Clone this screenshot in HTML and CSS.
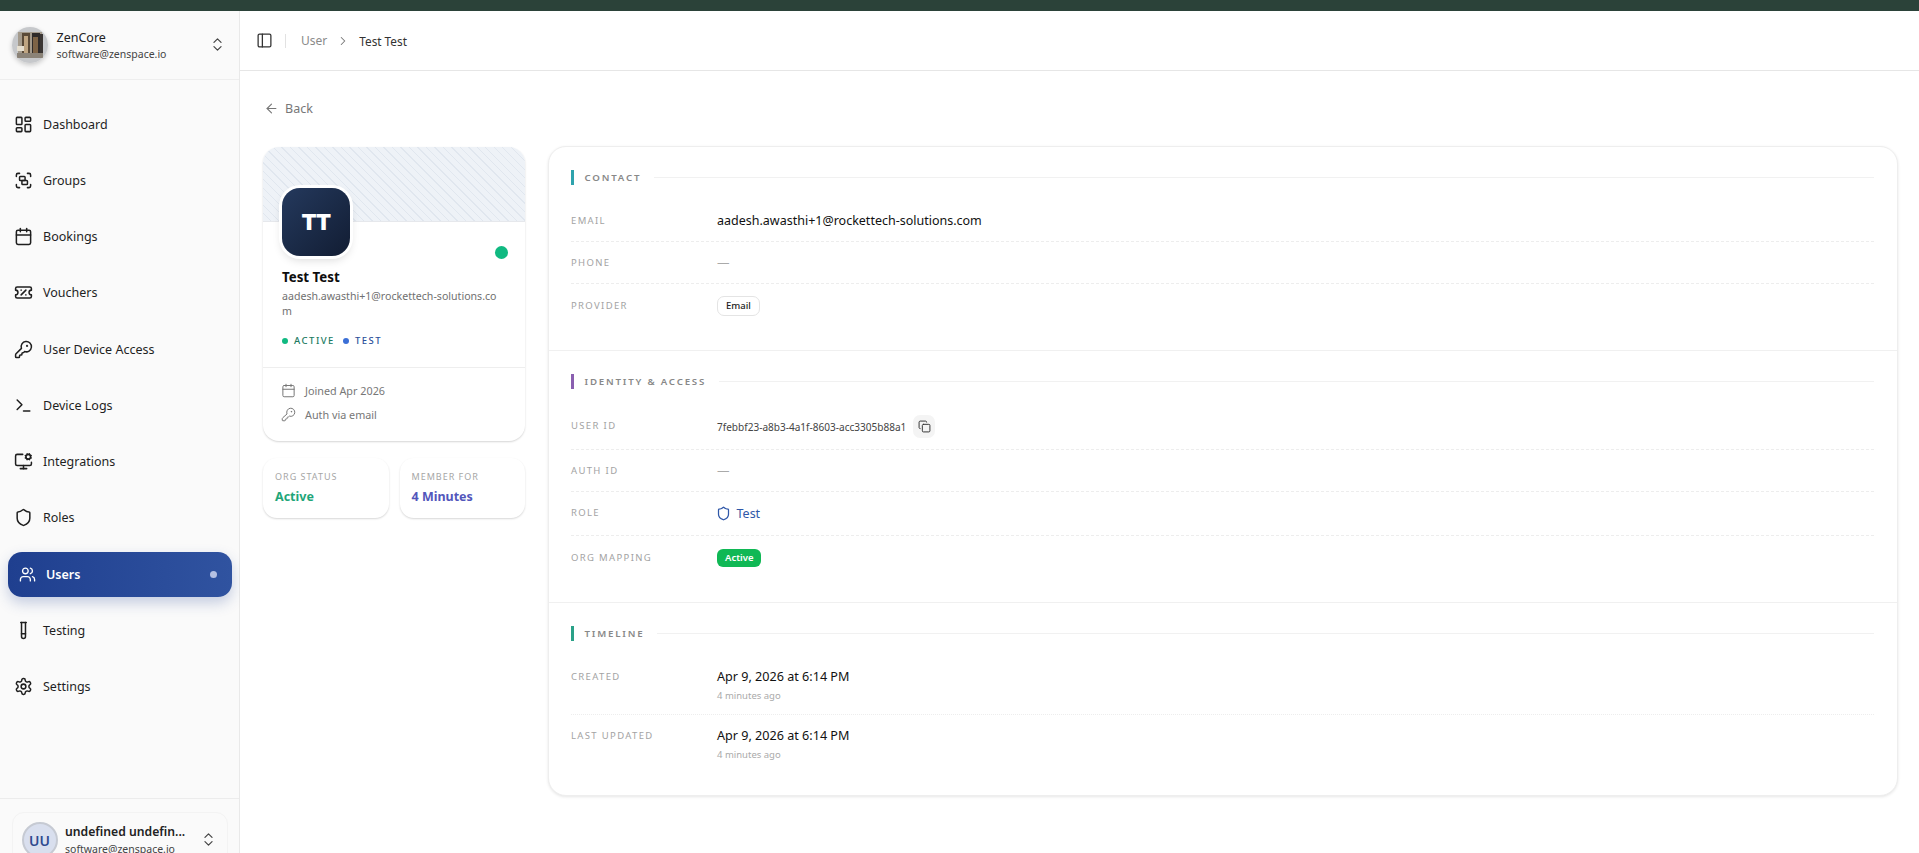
FILE: index.html
```html
<!DOCTYPE html>
<html lang="en">
<head>
<meta charset="utf-8">
<title>User</title>
<link rel="stylesheet" href="styles.css">
</head>
<body>
<svg class="defs" width="0" height="0" aria-hidden="true">
  <defs>
    <symbol id="i-dashboard" viewBox="0 0 24 24"><rect x="3" y="3" width="7" height="9" rx="1"/><rect x="14" y="3" width="7" height="5" rx="1"/><rect x="14" y="12" width="7" height="9" rx="1"/><rect x="3" y="16" width="7" height="5" rx="1"/></symbol>
    <symbol id="i-group" viewBox="0 0 24 24"><path d="M3 7V5c0-1.1.9-2 2-2h2"/><path d="M17 3h2c1.1 0 2 .9 2 2v2"/><path d="M21 17v2c0 1.1-.9 2-2 2h-2"/><path d="M7 21H5c-1.1 0-2-.9-2-2v-2"/><rect x="7" y="7" width="7" height="5" rx="1"/><rect x="10" y="12" width="7" height="5" rx="1"/></symbol>
    <symbol id="i-calendar" viewBox="0 0 24 24"><path d="M8 2v4"/><path d="M16 2v4"/><rect x="3" y="4" width="18" height="18" rx="2"/><path d="M3 10h18"/></symbol>
    <symbol id="i-ticket" viewBox="0 0 24 24"><path d="M2 9a3 3 0 1 1 0 6v2a2 2 0 0 0 2 2h16a2 2 0 0 0 2-2v-2a3 3 0 1 1 0-6V7a2 2 0 0 0-2-2H4a2 2 0 0 0-2 2Z"/><path d="M9 9h.01"/><path d="m15 9-6 6"/><path d="M15 15h.01"/></symbol>
    <symbol id="i-key" viewBox="0 0 24 24"><path d="M2.586 17.414A2 2 0 0 0 2 18.828V21a1 1 0 0 0 1 1h3a1 1 0 0 0 1-1v-1a1 1 0 0 1 1-1h1a1 1 0 0 0 1-1v-1a1 1 0 0 1 1-1h.172a2 2 0 0 0 1.414-.586l.814-.814a6.5 6.5 0 1 0-4-4z"/><circle cx="16.5" cy="7.5" r=".5"/></symbol>
    <symbol id="i-terminal" viewBox="0 0 24 24"><polyline points="4 17 10 11 4 5"/><line x1="12" y1="19" x2="20" y2="19"/></symbol>
    <symbol id="i-monitor" viewBox="0 0 24 24"><path d="M12 17v4"/><path d="m14.305 7.53.923-.382"/><path d="m15.228 4.852-.923-.383"/><path d="m16.852 3.228-.383-.924"/><path d="m16.852 8.772-.383.923"/><path d="m19.148 3.228.383-.924"/><path d="m19.53 9.696-.382-.924"/><path d="m20.772 4.852.924-.383"/><path d="m20.772 7.148.924.383"/><path d="M22 13v2a2 2 0 0 1-2 2H4a2 2 0 0 1-2-2V5a2 2 0 0 1 2-2h7"/><path d="M8 21h8"/><circle cx="18" cy="6" r="3"/></symbol>
    <symbol id="i-shield" viewBox="0 0 24 24"><path d="M20 13c0 5-3.5 7.5-7.66 8.95a1 1 0 0 1-.67-.01C7.5 20.5 4 18 4 13V6a1 1 0 0 1 1-1c2 0 4.5-1.2 6.24-2.72a1.17 1.17 0 0 1 1.52 0C14.51 3.81 17 5 19 5a1 1 0 0 1 1 1z"/></symbol>
    <symbol id="i-users" viewBox="0 0 24 24"><path d="M16 21v-2a4 4 0 0 0-4-4H6a4 4 0 0 0-4 4v2"/><path d="M16 3.128a4 4 0 0 1 0 7.744"/><path d="M22 21v-2a4 4 0 0 0-3-3.87"/><circle cx="9" cy="7" r="4"/></symbol>
    <symbol id="i-tube" viewBox="0 0 24 24"><path d="M14.5 2v17.5c0 1.4-1.1 2.5-2.5 2.5c-1.4 0-2.5-1.1-2.5-2.5V2"/><path d="M8.5 2h7"/><path d="M14.5 16h-5"/></symbol>
    <symbol id="i-settings" viewBox="0 0 24 24"><path d="M12.22 2h-.44a2 2 0 0 0-2 2v.18a2 2 0 0 1-1 1.73l-.43.25a2 2 0 0 1-2 0l-.15-.08a2 2 0 0 0-2.73.73l-.22.38a2 2 0 0 0 .73 2.73l.15.1a2 2 0 0 1 1 1.72v.51a2 2 0 0 1-1 1.74l-.15.09a2 2 0 0 0-.73 2.73l.22.38a2 2 0 0 0 2.73.73l.15-.08a2 2 0 0 1 2 0l.43.25a2 2 0 0 1 1 1.73V20a2 2 0 0 0 2 2h.44a2 2 0 0 0 2-2v-.18a2 2 0 0 1 1-1.73l.43-.25a2 2 0 0 1 2 0l.15.08a2 2 0 0 0 2.73-.73l.22-.39a2 2 0 0 0-.73-2.73l-.15-.08a2 2 0 0 1-1-1.74v-.5a2 2 0 0 1 1-1.74l.15-.09a2 2 0 0 0 .73-2.73l-.22-.38a2 2 0 0 0-2.73-.73l-.15.08a2 2 0 0 1-2 0l-.43-.25a2 2 0 0 1-1-1.73V4a2 2 0 0 0-2-2z"/><circle cx="12" cy="12" r="3"/></symbol>
    <symbol id="i-updown" viewBox="0 0 24 24"><path d="m7 15 5 5 5-5"/><path d="m7 9 5-5 5 5"/></symbol>
    <symbol id="i-panel" viewBox="0 0 24 24"><rect x="3" y="3" width="18" height="18" rx="2"/><path d="M9 3v18"/></symbol>
    <symbol id="i-chevron" viewBox="0 0 24 24"><path d="m9 18 6-6-6-6"/></symbol>
    <symbol id="i-back" viewBox="0 0 24 24"><path d="m12 19-7-7 7-7"/><path d="M19 12H5"/></symbol>
    <symbol id="i-copy" viewBox="0 0 24 24"><rect x="8" y="8" width="14" height="14" rx="2"/><path d="M4 16c-1.1 0-2-.9-2-2V4c0-1.1.9-2 2-2h10c1.1 0 2 .9 2 2"/></symbol>
  </defs>
</svg>

<div class="topstrip"></div>
<div class="shell">
  <aside class="sidebar">
    <div class="org">
      <svg class="org-photo" viewBox="0 0 36 36">
        <rect width="36" height="36" fill="#c6c8cb"/>
        <rect x="6" y="5" width="24" height="26" fill="#a39a8c"/>
        <rect x="10" y="6" width="8" height="24" fill="#5a4a38"/>
        <rect x="20" y="6" width="8" height="24" fill="#2f2b2a"/>
        <rect x="12" y="9" width="4" height="17" fill="#bfa582"/>
        <rect x="21" y="10" width="5" height="16" fill="#7d6346"/>
        <rect x="28" y="7" width="3" height="22" fill="#3a3533"/>
        <rect x="5" y="19" width="7" height="5" fill="#e6dfd0"/>
        <rect x="5" y="26" width="26" height="5" fill="#8b8378"/>
      </svg>
      <div class="org-text">
        <div class="org-name">ZenCore</div>
        <div class="org-mail">software@zenspace.io</div>
      </div>
      <svg class="ic ic-updown"><use href="#i-updown"/></svg>
    </div>

    <nav class="nav">
      <a class="nav-item"><svg class="ic nav-ic"><use href="#i-dashboard"/></svg><span>Dashboard</span></a>
      <a class="nav-item"><svg class="ic nav-ic"><use href="#i-group"/></svg><span>Groups</span></a>
      <a class="nav-item"><svg class="ic nav-ic"><use href="#i-calendar"/></svg><span>Bookings</span></a>
      <a class="nav-item"><svg class="ic nav-ic"><use href="#i-ticket"/></svg><span>Vouchers</span></a>
      <a class="nav-item"><svg class="ic nav-ic"><use href="#i-key"/></svg><span>User Device Access</span></a>
      <a class="nav-item"><svg class="ic nav-ic"><use href="#i-terminal"/></svg><span>Device Logs</span></a>
      <a class="nav-item"><svg class="ic nav-ic"><use href="#i-monitor"/></svg><span>Integrations</span></a>
      <a class="nav-item"><svg class="ic nav-ic"><use href="#i-shield"/></svg><span>Roles</span></a>
      <a class="nav-item active"><svg class="ic nav-ic"><use href="#i-users"/></svg><span>Users</span><i class="nav-dot"></i></a>
      <a class="nav-item"><svg class="ic nav-ic"><use href="#i-tube"/></svg><span>Testing</span></a>
      <a class="nav-item"><svg class="ic nav-ic"><use href="#i-settings"/></svg><span>Settings</span></a>
    </nav>

    <div class="foot">
      <div class="foot-card">
        <div class="foot-avatar">UU</div>
        <div class="foot-text">
          <div class="foot-name">undefined undefin...</div>
          <div class="foot-mail">software@zenspace.io</div>
        </div>
        <svg class="ic ic-updown"><use href="#i-updown"/></svg>
      </div>
    </div>
  </aside>

  <main class="main">
    <header class="crumbs">
      <svg class="ic ic-panel"><use href="#i-panel"/></svg>
      <span class="crumb-sep"></span>
      <span class="crumb-link">User</span>
      <svg class="ic ic-chev"><use href="#i-chevron"/></svg>
      <span class="crumb-cur">Test Test</span>
    </header>

    <div class="content">
      <a class="back"><svg class="ic ic-back"><use href="#i-back"/></svg>Back</a>

      <div class="columns">
        <div class="left">
          <section class="profile">
            <div class="banner"></div>
            <div class="profile-body">
              <div class="avatar-row">
                <div class="avatar">TT</div>
                <i class="online"></i>
              </div>
              <h1 class="name">Test Test</h1>
              <p class="mail">aadesh.awasthi+1@rockettech-solutions.com</p>
              <div class="tags">
                <span class="tag tag-green"><i></i>ACTIVE</span>
                <span class="tag tag-blue"><i></i>TEST</span>
              </div>
            </div>
            <div class="facts">
              <div class="fact"><svg class="ic ic-fact"><use href="#i-calendar"/></svg>Joined Apr 2026</div>
              <div class="fact"><svg class="ic ic-fact"><use href="#i-key"/></svg>Auth via email</div>
            </div>
          </section>
          <div class="stats">
            <div class="stat"><div class="stat-label">ORG STATUS</div><div class="stat-value green">Active</div></div>
            <div class="stat"><div class="stat-label">MEMBER FOR</div><div class="stat-value violet">4 Minutes</div></div>
          </div>
        </div>

        <section class="details">
          <div class="block block-contact">
            <div class="block-head"><i class="bar bar-teal"></i><span>CONTACT</span><b></b></div>
            <div class="row r-email"><div class="label">EMAIL</div><div class="val strong mailval">aadesh.awasthi+1@rockettech-solutions.com</div></div>
            <div class="row r-plain"><div class="label">PHONE</div><div class="val dash">—</div></div>
            <div class="row r-last"><div class="label">PROVIDER</div><div class="val"><span class="pill">Email</span></div></div>
          </div>
          <div class="block block-identity">
            <div class="block-head"><i class="bar bar-purple"></i><span>IDENTITY &amp; ACCESS</span><b></b></div>
            <div class="row r-id"><div class="label">USER ID</div><div class="val idval"><span class="mono">7febbf23-a8b3-4a1f-8603-acc3305b88a1</span><span class="copy"><svg class="ic ic-copy"><use href="#i-copy"/></svg></span></div></div>
            <div class="row r-plain"><div class="label">AUTH ID</div><div class="val dash">—</div></div>
            <div class="row r-role"><div class="label">ROLE</div><div class="val role"><svg class="ic ic-role"><use href="#i-shield"/></svg>Test</div></div>
            <div class="row r-last"><div class="label">ORG MAPPING</div><div class="val"><span class="active-pill">Active</span></div></div>
          </div>
          <div class="block block-timeline">
            <div class="block-head"><i class="bar bar-green"></i><span>TIMELINE</span><b></b></div>
            <div class="row r-time"><div class="label">CREATED</div><div class="val"><div class="strong">Apr 9, 2026 at 6:14 PM</div><div class="sub">4 minutes ago</div></div></div>
            <div class="row r-time r-end"><div class="label">LAST UPDATED</div><div class="val"><div class="strong">Apr 9, 2026 at 6:14 PM</div><div class="sub">4 minutes ago</div></div></div>
          </div>
        </section>
      </div>
    </div>
  </main>
</div>
</body>
</html>
```

FILE: styles.css
```css
* { box-sizing: border-box; }
html, body { margin: 0; height: 853px; overflow: hidden; background: #fff; }
body { font-family: "Noto Sans", "Open Sans", sans-serif; color: #111; font-size: 13px; display: flex; flex-direction: column; }
.defs { position: absolute; }
.ic { fill: none; stroke: currentColor; stroke-width: 2; stroke-linecap: round; stroke-linejoin: round; flex: none; display: block; }

.topstrip { height: 11px; background: #2b4239; flex: none; }
.shell { flex: 1; display: flex; min-height: 0; }

/* sidebar */
.sidebar { width: 240px; flex: none; background: #fafafa; border-right: 1px solid #e9e9e9; display: flex; flex-direction: column; }
.org { height: 69px; border-bottom: 1px solid #eee; display: flex; align-items: center; padding: 0 13px 1px 12px; }
.org-photo { width: 36px; height: 36px; border-radius: 50%; box-shadow: 0 2px 5px rgba(0,0,0,.2); flex: none; }
.org-text { margin: 2px 0 0 8.5px; flex: 1; min-width: 0; }
.org-name { font-size: 12.5px; line-height: 17px; color: #222; font-weight: 450; }
.org-mail { font-size: 10.5px; line-height: 16px; color: #444; }
.ic-updown { width: 17px; height: 17px; color: #444; stroke-width: 1.7; }

.nav { flex: 1; padding: 21.7px 7px 0 8px; display: flex; flex-direction: column; gap: 11.25px; }
.nav-item { height: 45px; display: flex; align-items: center; padding-left: 5.5px; font-size: 12.5px; font-weight: 450; color: #1f1f1f; }
.nav-ic { width: 19px; height: 19px; margin-right: 10.5px; stroke-width: 1.9; }
.nav-item.active { background: linear-gradient(90deg, #1f3f8f, #3053a0); color: #fff; border-radius: 14px; padding: 0 15px 0 10.5px; box-shadow: 0 6px 14px rgba(40,70,150,.25); font-weight: 600; }
.nav-item.active .nav-ic { width: 17px; height: 17px; margin-right: 10.5px; }
.nav-item.active span { flex: 1; }
.nav-dot { width: 7px; height: 7px; border-radius: 50%; background: #b4c0e2; }

.foot { border-top: 1px solid #ececec; height: 55px; padding: 13px 11px 0 12px; overflow: hidden; flex: none; }
.foot-card { height: 60px; border: 1px solid #f3f3f3; border-radius: 12px; display: flex; align-items: flex-start; padding: 9px 10.5px 0 8.5px; }
.foot-avatar { width: 36px; height: 36px; border-radius: 50%; background: #d9dfee; border: 2px solid #c6cad3; color: #2f4a8f; font-weight: 600; font-size: 14px; display: flex; align-items: center; justify-content: center; flex: none; }
.foot-text { margin: 1px 0 0 7.5px; flex: 1; min-width: 0; }
.foot-name { font-size: 12.2px; line-height: 18px; font-weight: 600; color: #222; white-space: nowrap; }
.foot-mail { font-size: 10.5px; line-height: 14px; color: #444; white-space: nowrap; margin-top: 1px; }
.foot-card .ic-updown { margin-top: 8.5px; }

/* main */
.main { flex: 1; min-width: 0; display: flex; flex-direction: column; }
.crumbs { height: 60px; border-bottom: 1px solid #e6e6e6; display: flex; align-items: center; padding: 0 0 0 16px; flex: none; }
.ic-panel { width: 17px; height: 17px; color: #333; stroke-width: 1.8; }
.crumb-sep { width: 1px; height: 14px; background: #e2e2e2; margin: 0 15px 0 12px; }
.crumb-link { font-size: 12px; color: #8a8a8a; }
.ic-chev { width: 14px; height: 14px; color: #777; margin: 0 9px; stroke-width: 1.8; }
.crumb-cur { font-size: 11.8px; color: #333; }

.content { flex: 1; padding: 27px 21px 0 23px; background: #fff; }
.back { display: flex; align-items: center; height: 20px; font-size: 12.5px; color: #777; padding-left: 1px; }
.ic-back { width: 15px; height: 15px; margin-right: 6px; color: #777; stroke-width: 1.8; }
.columns { display: flex; gap: 23px; margin-top: 28px; align-items: flex-start; }

.left { width: 262px; flex: none; display: flex; flex-direction: column; gap: 17px; padding-top: 1px; }
.profile { border-radius: 16px; background: #fff; box-shadow: 0 1px 2px rgba(0,0,0,.17); overflow: hidden; height: 294px; }
.banner { height: 75px; background-color: #eef2f7; background-image: repeating-linear-gradient(45deg, transparent 0 5px, rgba(170,185,205,.2) 5px 6px); border-bottom: 1px solid #e6e8ec; }
.profile-body { padding: 0 19px; height: 145px; display: flow-root; }
.avatar-row { display: flex; align-items: flex-end; justify-content: space-between; margin-top: -34px; }
.avatar { width: 68px; height: 68px; border-radius: 18px; background: linear-gradient(135deg, #24395d, #121d33); box-shadow: 0 0 0 3px #fff, 0 4px 10px rgba(0,0,0,.15); color: #fff; font-family: Inter, "Liberation Sans", sans-serif; font-weight: 900; font-size: 22px; letter-spacing: -.5px; display: flex; align-items: center; justify-content: center; }
.online { width: 13px; height: 13px; border-radius: 50%; background: #10b981; margin: 0 -2.3px -3px 0; }
.name { font-size: 13.3px; line-height: 20px; margin: 11px 0 0; font-weight: 700; color: #0d0d0d; }
.mail { font-size: 10.6px; line-height: 15.5px; margin: 1.5px 0 0; color: #707070; width: 220px; word-break: break-all; }
.tags { display: flex; gap: 8px; margin-top: 14px; }
.tag { font-size: 9.5px; font-weight: 500; letter-spacing: 1.5px; display: flex; align-items: center; gap: 6px; line-height: 14px; }
.tag i { width: 6px; height: 6px; border-radius: 50%; }
.tag-green { color: #207a5f; } .tag-green i { background: #10b981; }
.tag-blue { color: #2b4f9a; } .tag-blue i { background: #3b6fd6; }
.facts { border-top: 1px solid #eee; padding: 12.5px 19px 0; display: flex; flex-direction: column; gap: 5px; }
.fact { display: flex; align-items: center; font-size: 10.8px; color: #777; height: 19px; }
.ic-fact { width: 15px; height: 15px; margin-right: 9px; margin-left: -1px; color: #777; stroke-width: 1.6; }

.stats { display: flex; justify-content: space-between; }
.stat { width: 125.5px; height: 60px; border-radius: 14px; box-shadow: 0 1px 2px rgba(0,0,0,.16); padding: 12px 12px 0; background: #fff; }
.stat-label { font-size: 9px; letter-spacing: 1px; color: #a6a6a6; line-height: 13px; }
.stat-value { font-size: 12.5px; font-weight: 700; line-height: 18px; margin-top: 5px; }
.green { color: #1fa67a; } .violet { color: #5256bb; }

.details { flex: 1; min-width: 0; height: 650px; border-radius: 18px; border: 1px solid #eee; box-shadow: 0 1px 3px rgba(0,0,0,.1); background: #fff; }
.block { padding: 22px 23px 0 22px; }
.block-contact { height: 204px; border-bottom: 1px solid #f0f0f0; }
.block-identity { height: 252px; border-bottom: 1px solid #f0f0f0; }
.block-head { display: flex; align-items: center; height: 16px; font-size: 9.7px; font-weight: 600; letter-spacing: 1.8px; color: #888; margin-bottom: 19px; }
.block-head span { margin: 0 13px 0 11px; }
.block-head b { flex: 1; height: 1px; background: #f1f1f1; }
.bar { width: 2.5px; height: 15px; }
.bar-teal { background: #2fa3ad; } .bar-purple { background: #8a5fb0; } .bar-green { background: #2aa188; }

.row { display: flex; border-bottom: 1px dashed #ededed; }
.label { width: 146px; flex: none; font-size: 9.5px; letter-spacing: 1.35px; color: #a3a3a3; line-height: 14px; margin-top: 2px; }
.val { font-size: 12.5px; color: #222; min-width: 0; }
.strong { font-size: 12.6px; font-weight: 450; color: #111; line-height: 18px; }
.mailval { font-size: 12.5px; }
.dash { color: #aaa; line-height: 16px; margin-top: 1px; }
.r-email { height: 38px; padding-top: 8px; }
.r-id { height: 42px; padding-top: 7px; }
.r-id .label { margin-top: 4px; }
.r-plain { height: 42px; padding-top: 12px; }
.r-role { height: 44px; padding-top: 12px; }
.r-last { padding-top: 12px; border-bottom: 0; }
.r-last .label { margin-top: 3px; }
.pill { display: inline-block; height: 20px; line-height: 18px; border: 1px solid #e4e4e4; border-radius: 7px; padding: 0 8px; font-size: 9.5px; font-weight: 500; color: #222; }
.idval { display: flex; align-items: flex-start; }
.mono { font-size: 10.05px; color: #444; line-height: 24px; }
.copy { width: 22px; height: 23px; background: #f4f4f4; border-radius: 7px; margin-left: 7px; display: flex; align-items: center; justify-content: center; }
.ic-copy { width: 13px; height: 13px; color: #333; stroke-width: 1.8; }
.role { display: flex; align-items: center; color: #2f57a8; height: 18px; }
.ic-role { width: 15px; height: 15px; margin: 0 6px 0 -1.5px; color: #2f57a8; stroke-width: 2; }
.active-pill { display: inline-block; height: 18px; line-height: 18px; background: #10b855; color: #fff; border-radius: 6px; padding: 0 8px; font-size: 9.5px; font-weight: 600; margin-top: 1px; vertical-align: top; }
.r-time { height: 55px; padding-top: 8px; border-bottom-style: dotted; }
.r-end { border-bottom: 0; padding-top: 12px; }
.sub { font-size: 9.5px; color: #aaa; margin-top: 2.5px; line-height: 13px; }
```
